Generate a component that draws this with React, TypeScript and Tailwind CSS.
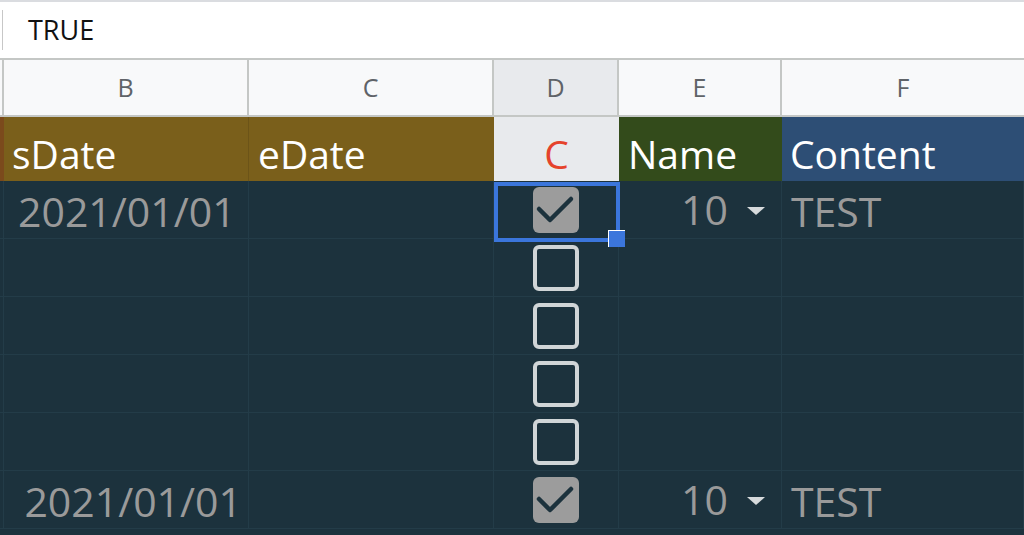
import React from 'react'

const font = { fontFamily: '"Open Sans", "Noto Sans", sans-serif' }

function Checkbox({ checked }: { checked: boolean }) {
  if (checked) {
    return (
      <div className="w-[46px] h-[46px] rounded-[6px] bg-[#9c9c9c] flex items-center justify-center">
        <svg width="46" height="46" viewBox="0 0 46 46">
          <path d="M6 22 L17 33 L38 12" fill="none" stroke="#1c323d" strokeWidth="4.5" strokeLinecap="round" strokeLinejoin="round" />
        </svg>
      </div>
    )
  }
  return <div className="w-[46px] h-[46px] rounded-[6px] border-[4px] border-[#d0d5d7]" />
}

function Caret() {
  return (
    <svg width="20" height="10" viewBox="0 0 20 10" className="ml-[18px] mr-[15px] mt-[2px]">
      <path d="M1 1 L19 1 L10 9 Z" fill="#d6dadc" />
    </svg>
  )
}

type Row = { date?: string; dateRight?: boolean; checked: boolean; num?: string; text?: string }

const rows: Row[] = [
  { date: '2021/01/01', checked: true, num: '10', text: 'TEST' },
  { checked: false },
  { checked: false },
  { checked: false },
  { checked: false },
  { date: '2021/01/01', dateRight: true, checked: true, num: '10', text: 'TEST' },
]

const cell = 'border-r border-b border-[#233c48] h-[58px] shrink-0'

export default function App() {
  return (
    <div className="w-[1024px] h-[535px] overflow-hidden bg-[#1c323d] flex flex-col" style={font}>
      {/* formula bar */}
      <div className="h-[2px] bg-[#dadce0] shrink-0" />
      <div className="h-[56px] bg-white flex items-center shrink-0">
        <div className="w-[1px] h-[40px] ml-[2px] bg-[#c7c7c7]" />
        <div className="ml-[25px] text-[27px] leading-[56px] text-[#111]">TRUE</div>
      </div>

      {/* column letters */}
      <div className="h-[59px] flex border-y-2 border-[#c4c7c5] bg-[#f8f9fa] text-[25px] text-[#5f6368] shrink-0">
        <div className="w-[4px] border-r-2 border-[#c4c7c5]" />
        <div className="w-[245px] border-r-2 border-[#c4c7c5] flex items-center justify-center">B</div>
        <div className="w-[245px] border-r-2 border-[#c4c7c5] flex items-center justify-center">C</div>
        <div className="w-[125px] border-r-2 border-[#c4c7c5] bg-[#e8eaed] flex items-center justify-center">D</div>
        <div className="w-[163px] border-r-2 border-[#c4c7c5] flex items-center justify-center">E</div>
        <div className="flex-1 flex items-center justify-center">F</div>
      </div>

      {/* header data row */}
      <div className="h-[64px] flex text-[39px] text-white shrink-0">
        <div className="w-[4px] bg-[#7b4a1c]" />
        <div className="w-[245px] bg-[#7a5f1b] border-r border-[#6c5418] pl-[8px] pt-[9px] leading-[55px]">sDate</div>
        <div className="w-[245px] bg-[#7a5f1b] pl-[9px] pt-[9px] leading-[55px]">eDate</div>
        <div className="w-[125px] bg-[#e8eaed] text-[#e5432c] text-center pt-[9px] leading-[55px]">C</div>
        <div className="w-[163px] bg-[#334b1b] pl-[9px] pt-[9px] leading-[55px]">Name</div>
        <div className="flex-1 bg-[#2d4e75] pl-[8px] pt-[9px] leading-[55px]">Content</div>
      </div>

      {/* data rows */}
      {rows.map((r, i) => (
        <div key={i} className="flex text-[41px] text-[#9a9a9a] leading-[61px] shrink-0">
          <div className={`w-[4px] ${cell}`} />
          <div className={`w-[245px] ${cell} ${r.dateRight ? 'text-right pr-[6px]' : 'pl-[14px]'}`}>{r.date}</div>
          <div className={`w-[245px] ${cell}`} />
          <div className={`w-[125px] ${cell} relative flex items-center justify-center`}>
            <Checkbox checked={r.checked} />
            {i === 0 && (
              <>
                <div className="absolute left-0 top-[1px] w-[126px] h-[60px] border-[4px] border-[#3b76dc]" />
                <div className="absolute left-[114px] top-[49px] w-[17px] h-[17px] bg-[#3b76dc] border-l border-t border-white z-10" />
              </>
            )}
          </div>
          <div className={`w-[163px] ${cell} flex items-center justify-end`}>
            {r.num && (
              <>
                <span>{r.num}</span>
                <Caret />
              </>
            )}
          </div>
          <div className={`flex-1 ${cell} pl-[9px]`}>{r.text}</div>
        </div>
      ))}
    </div>
  )
}
